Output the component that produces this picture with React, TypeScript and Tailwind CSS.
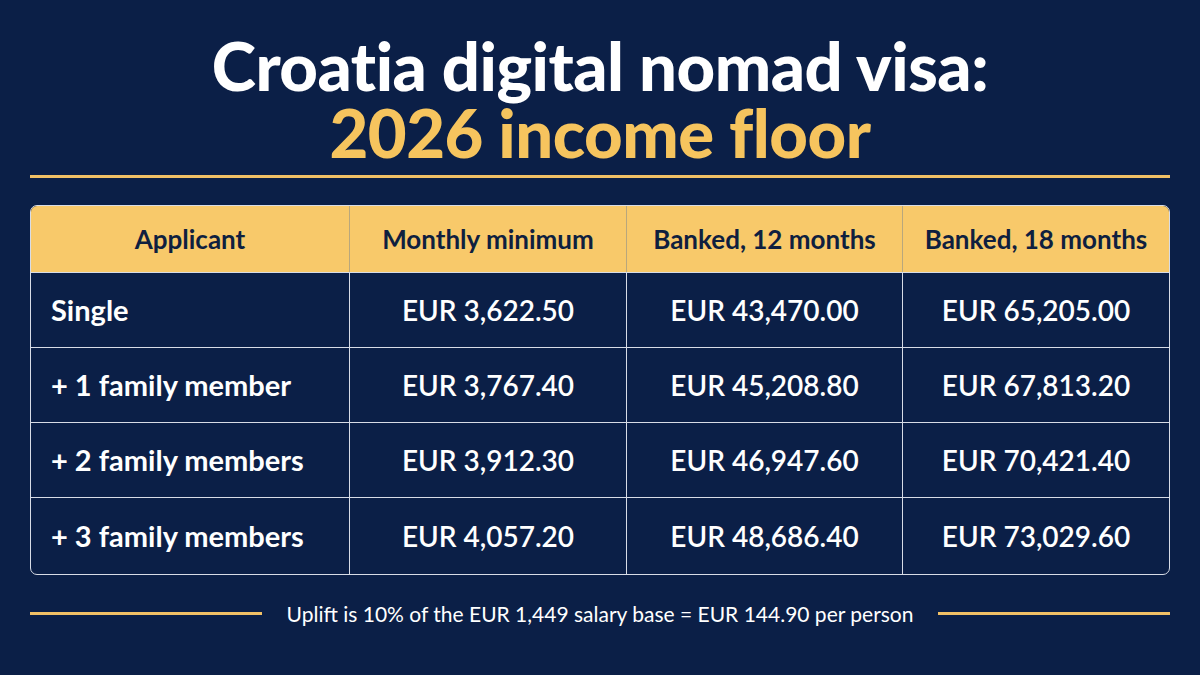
import React from "react";

const rows = [
  ["Single", "EUR 3,622.50", "EUR 43,470.00", "EUR 65,205.00"],
  ["+ 1 family member", "EUR 3,767.40", "EUR 45,208.80", "EUR 67,813.20"],
  ["+ 2 family members", "EUR 3,912.30", "EUR 46,947.60", "EUR 70,421.40"],
  ["+ 3 family members", "EUR 4,057.20", "EUR 48,686.40", "EUR 73,029.60"],
];

const cols = ["w-[319px]", "w-[277px]", "w-[276px]", "flex-1"];

export default function App() {
  return (
    <div
      className="w-[1200px] h-[675px] bg-[#0b1f47] flex flex-col px-[30px] overflow-hidden"
      style={{ fontFamily: "Lato, 'Open Sans', sans-serif" }}
    >
      <div className="flex flex-col items-center pt-[32px]">
        <div className="text-white text-[67px] font-black leading-[67px] tracking-[-0.5px]">
          Croatia digital nomad visa:
        </div>
        <div className="text-[#f6c45e] text-[67px] font-black leading-[67px] tracking-[-0.5px]">
          2026 income floor
        </div>
      </div>
      <div className="h-[3px] bg-[#f1c066] mt-[9px]" />
      <div className="mt-[27px] border border-[#d8dce6] rounded-[7px] overflow-hidden">
        <div className="flex h-[66px] bg-[#f8c96a] text-[#0f1f3f] text-[26px] font-bold">
          {["Applicant", "Monthly minimum", "Banked, 12 months", "Banked, 18 months"].map((h, i) => (
            <div
              key={h}
              className={`${cols[i]} flex items-center justify-center ${i < 3 ? "border-r border-[#b9a77c]" : ""}`}
            >
              {h}
            </div>
          ))}
        </div>
        {rows.map((r, ri) => (
          <div
            key={ri}
            className={`flex ${ri === 3 ? "h-[77px]" : "h-[75px]"} text-white border-t border-[#d8dce6]`}
          >
            {r.map((c, i) => (
              <div
                key={i}
                className={`${cols[i]} flex items-center ${i === 0 ? "justify-start pl-[20px] font-bold text-[29px]" : "justify-center font-semibold text-[28px]"} ${i < 3 ? "border-r border-[#d8dce6]" : ""}`}
              >
                {c}
              </div>
            ))}
          </div>
        ))}
      </div>
      <div className="flex items-center mt-[23px] gap-[25px]">
        <div className="flex-1 h-[3px] bg-[#f1c066]" />
        <div className="text-white text-[21px]">
          Uplift is 10% of the EUR 1,449 salary base = EUR 144.90 per person
        </div>
        <div className="flex-1 h-[3px] bg-[#f1c066]" />
      </div>
    </div>
  );
}
